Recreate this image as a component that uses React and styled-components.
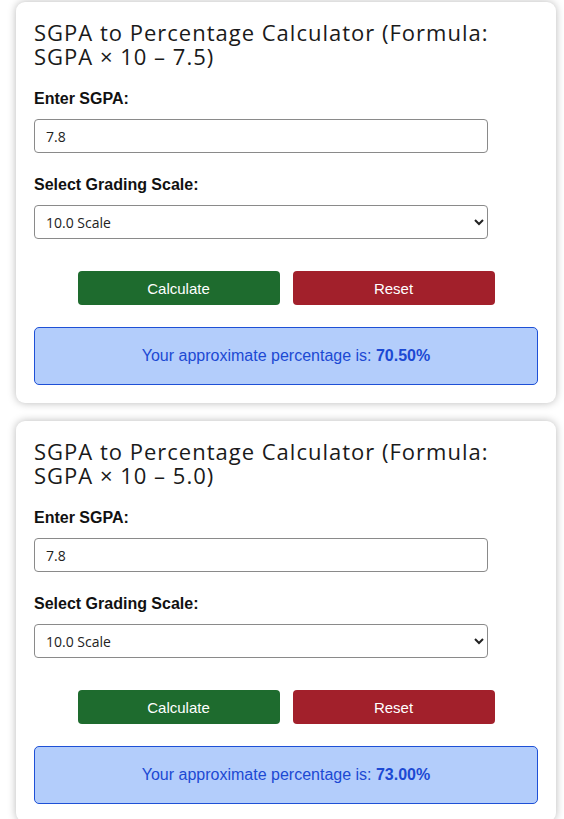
import React, { useState } from "react";
import styled, { createGlobalStyle } from "styled-components";

const GlobalStyle = createGlobalStyle`
  body {
    margin: 0;
    background: #ffffff;
    font-family: "Liberation Sans", Arial, sans-serif;
  }
`;

const Page = styled.div`
  padding: 2px 8px 16px 16px;
  display: flex;
  flex-direction: column;
  gap: 18px;
`;

const Card = styled.div`
  background: #fff;
  border-radius: 9px;
  box-shadow: 0 0 8px rgba(0, 0, 0, 0.28);
  padding: 18px;
`;

const Title = styled.h2`
  margin: 0 0 22px;
  font-family: "Open Sans", sans-serif;
  font-weight: 500;
  font-size: 22px;
  line-height: 24px;
  letter-spacing: 1px;
  color: #1a1a1a;
`;

const Label = styled.label`
  display: block;
  font-weight: 700;
  font-size: 16px;
  line-height: 18px;
  color: #111;
  margin-bottom: 11px;
`;

const Field = styled.div`
  margin-bottom: 23px;
`;

const Input = styled.input`
  box-sizing: border-box;
  width: 90%;
  height: 34px;
  padding: 0 11px;
  border: 1px solid #8a8a8a;
  border-radius: 4px;
  font-family: "Open Sans", sans-serif;
  font-size: 14px;
  color: #222;
  background: #fff;
`;

const Select = styled.select`
  box-sizing: border-box;
  width: 90%;
  height: 34px;
  padding: 0 7px;
  border: 1px solid #8a8a8a;
  border-radius: 4px;
  font-family: "Open Sans", sans-serif;
  font-size: 14px;
  color: #222;
  background: #fff;
`;

const Buttons = styled.div`
  display: flex;
  justify-content: center;
  gap: 13px;
  margin: 32px 0 22px;
`;

const Button = styled.button`
  width: 202px;
  height: 34px;
  border: none;
  border-radius: 4px;
  background: ${(p) => (p.$variant === "reset" ? "#a2202b" : "#1e6b2e")};
  color: #fff;
  font-family: "Liberation Sans", Arial, sans-serif;
  font-size: 15px;
  cursor: pointer;
`;

const Result = styled.div`
  height: 58px;
  box-sizing: border-box;
  display: flex;
  align-items: center;
  justify-content: center;
  background: #b3cdfb;
  border: 1px solid #1e50d6;
  border-radius: 5px;
  color: #1c49d3;
  font-size: 16px;

  strong {
    font-weight: 700;
  }
`;

function Calculator({ offset }) {
  const [sgpa, setSgpa] = useState("7.8");
  const [scale, setScale] = useState("10");
  const value = (parseFloat(sgpa) * 10 - offset).toFixed(2);

  return (
    <Card>
      <Title>
        SGPA to Percentage Calculator (Formula: SGPA × 10 – {offset.toFixed(1)})
      </Title>
      <Field>
        <Label>Enter SGPA:</Label>
        <Input value={sgpa} onChange={(e) => setSgpa(e.target.value)} />
      </Field>
      <Field>
        <Label>Select Grading Scale:</Label>
        <Select value={scale} onChange={(e) => setScale(e.target.value)}>
          <option value="10">10.0 Scale</option>
          <option value="4">4.0 Scale</option>
        </Select>
      </Field>
      <Buttons>
        <Button>Calculate</Button>
        <Button $variant="reset" onClick={() => setSgpa("")}>
          Reset
        </Button>
      </Buttons>
      <Result>
        Your approximate percentage is:&nbsp;<strong>{value}%</strong>
      </Result>
    </Card>
  );
}

export default function App() {
  return (
    <>
      <GlobalStyle />
      <Page>
        <Calculator offset={7.5} />
        <Calculator offset={5.0} />
      </Page>
    </>
  );
}
